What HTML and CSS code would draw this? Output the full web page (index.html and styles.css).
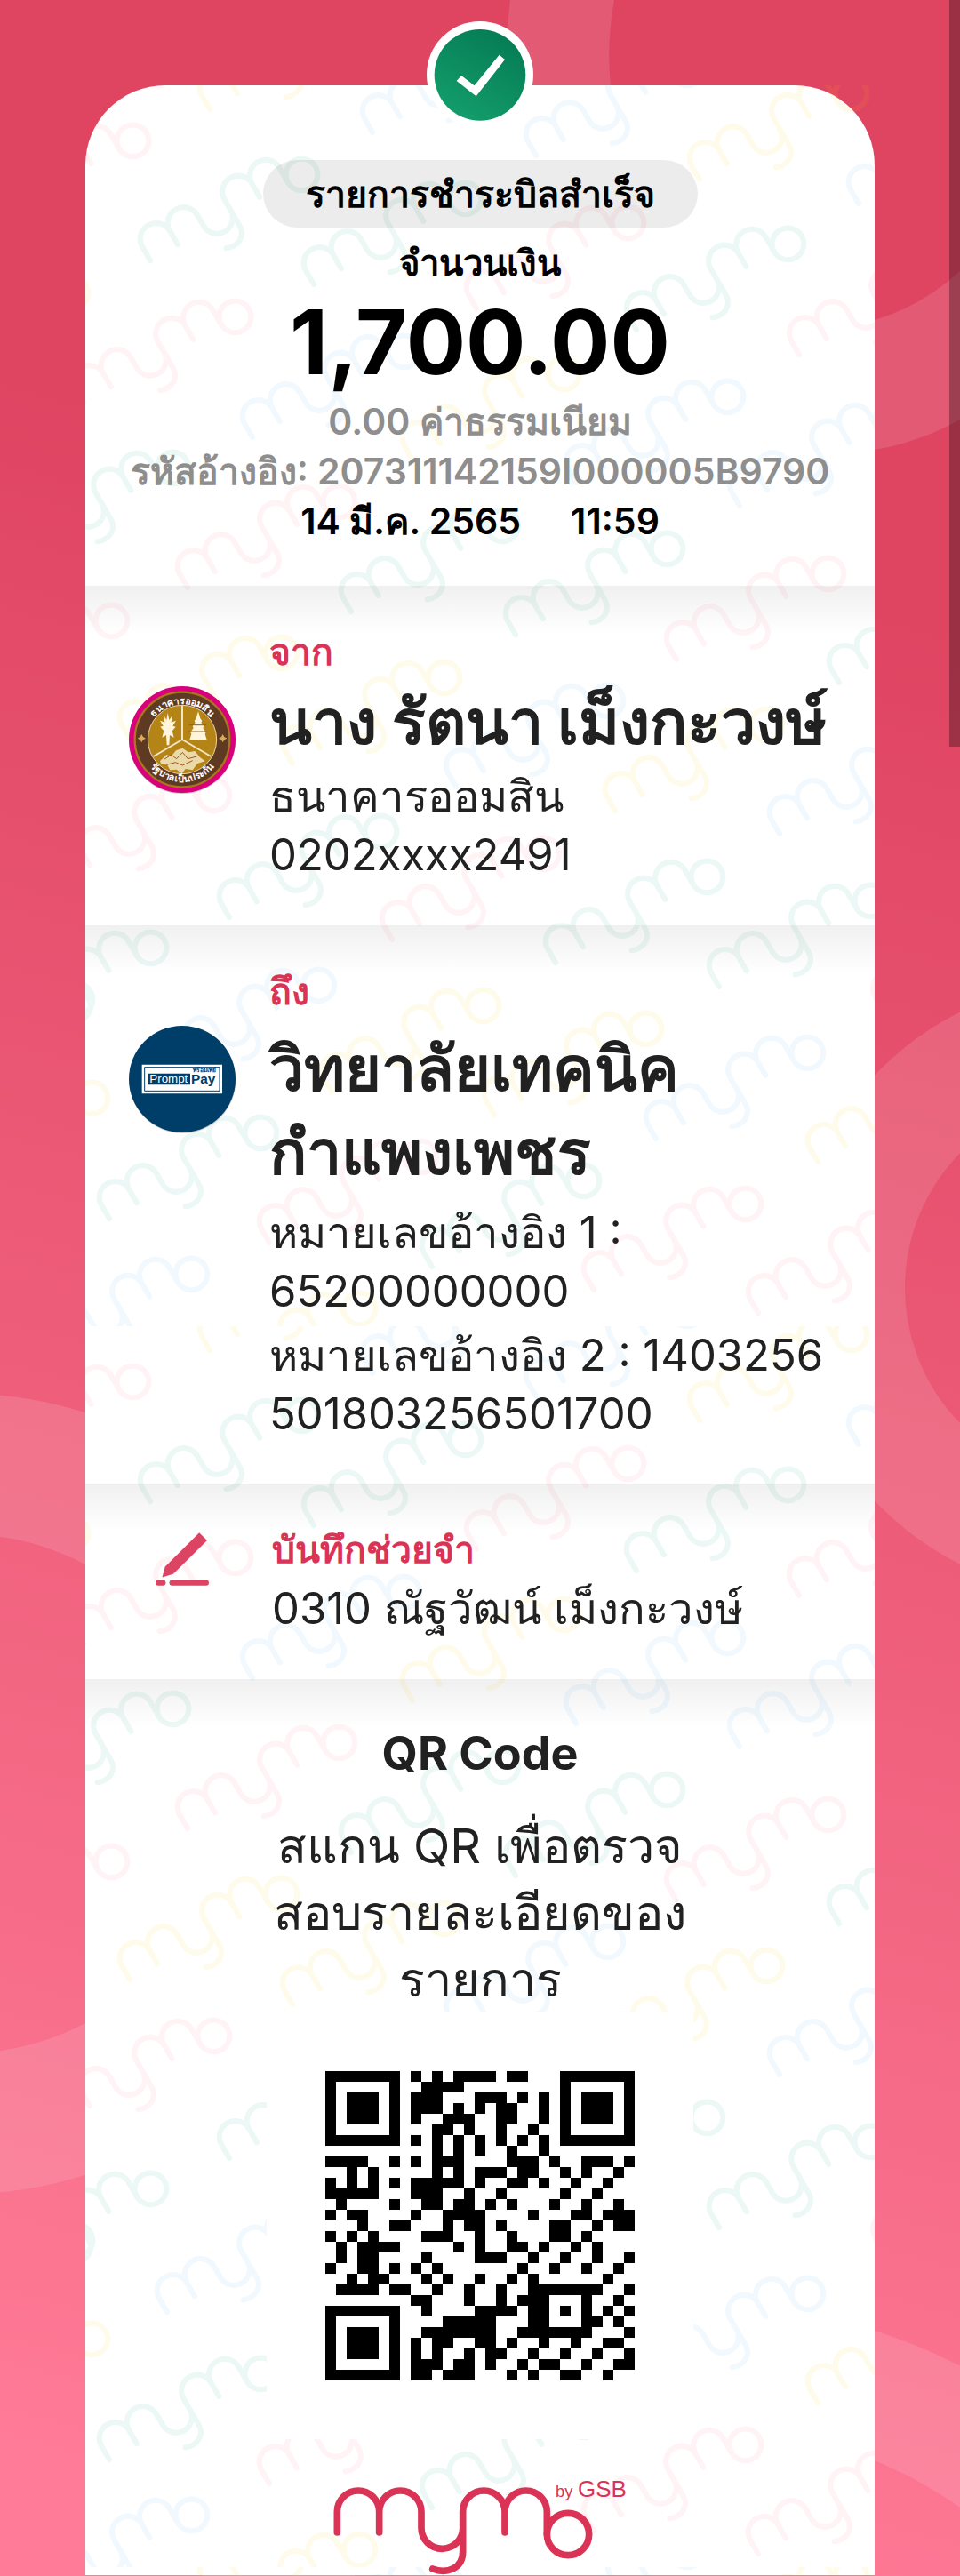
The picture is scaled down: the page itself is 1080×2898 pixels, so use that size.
FILE: index.html
```html
<!DOCTYPE html>
<html lang="th">
<head>
<meta charset="utf-8">
<meta name="viewport" content="width=device-width, initial-scale=1">
<title>รายการชำระบิลสำเร็จ</title>
<link rel="stylesheet" href="styles.css">
</head>
<body>
<svg class="backdrop" viewBox="0 0 1080 2898" preserveAspectRatio="xMidYMin slice" aria-hidden="true">
  <g fill="#fff" fill-opacity=".12">
    <path d="M574 0C560 120 580 250 660 370S860 520 984 506Q1036 497 1080 472V305Q1036 345 984 360C800 400 664 240 687 96Q682 50 691 0Z"/>
  </g>
  <g fill="none" stroke="#fff" stroke-opacity=".12">
    <circle cx="1235" cy="1449" r="282" stroke-width="130"/>
    <circle cx="-41" cy="2018" r="371" stroke-width="158"/>
    <circle cx="783" cy="3247" r="588" stroke-width="137"/>
  </g>
</svg>
<div class="scroll-thumb"></div>

<main class="slip">
  <svg class="watermark" aria-hidden="true">
    <defs>
      <g id="mymo" fill="none" stroke-width="24" stroke-linecap="round" transform="rotate(-30) scale(.2515) translate(-118 -270)">
        <path d="M118 270V200A71 71 0 0 1 260 200V270M260 200A71 71 0 0 1 402 200V255A70 70 0 0 0 542 255M440 393C490 412 542 390 542 335V200A71 71 0 0 1 684 200V270M684 200A71 71 0 0 1 826 200V275"/>
        <circle cx="897" cy="276" r="71"/>
      </g>
      <pattern id="marks" width="888" height="1396" patternUnits="userSpaceOnUse">
        <g transform="translate(-96 -96)">
          <g class="mark-green">
            <use href="#mymo" x="169" y="293"/><use href="#mymo" x="353" y="320"/><use href="#mymo" x="716" y="371"/>
            <use href="#mymo" x="24" y="623"/><use href="#mymo" x="395" y="688"/><use href="#mymo" x="580" y="714"/><use href="#mymo" x="944" y="768"/>
            <use href="#mymo" x="258" y="1032"/><use href="#mymo" x="625" y="1083"/><use href="#mymo" x="809" y="1110"/>
            <use href="#mymo" x="-1" y="1163"/><use href="#mymo" x="-84" y="1221"/><use href="#mymo" x="123" y="1371"/><use href="#mymo" x="486" y="1425"/>
          </g>
          <g class="mark-pink">
            <use href="#mymo" x="-21" y="255"/><use href="#mymo" x="536" y="347"/><use href="#mymo" x="899" y="399"/>
            <use href="#mymo" x="94" y="453"/><use href="#mymo" x="211" y="661"/><use href="#mymo" x="761" y="742"/>
            <use href="#mymo" x="-45" y="795"/><use href="#mymo" x="70" y="991"/><use href="#mymo" x="441" y="1057"/><use href="#mymo" x="993" y="1136"/>
            <use href="#mymo" x="303" y="1398"/><use href="#mymo" x="668" y="1451"/><use href="#mymo" x="853" y="1477"/>
          </g>
          <g class="mark-blue">
            <use href="#mymo" x="419" y="149"/><use href="#mymo" x="603" y="175"/><use href="#mymo" x="966" y="229"/>
            <use href="#mymo" x="284" y="492"/><use href="#mymo" x="648" y="543"/><use href="#mymo" x="832" y="569"/>
            <use href="#mymo" x="513" y="885"/><use href="#mymo" x="877" y="938"/><use href="#mymo" x="188" y="1205"/>
            <use href="#mymo" x="738" y="1281"/><use href="#mymo" x="45" y="1530"/><use href="#mymo" x="535" y="1610"/>
          </g>
          <g class="mark-yellow">
            <use href="#mymo" x="236" y="123"/><use href="#mymo" x="787" y="202"/><use href="#mymo" x="-89" y="426"/>
            <use href="#mymo" x="464" y="517"/><use href="#mymo" x="146" y="831"/><use href="#mymo" x="329" y="859"/><use href="#mymo" x="692" y="912"/>
            <use href="#mymo" x="373" y="1228"/><use href="#mymo" x="556" y="1254"/><use href="#mymo" x="920" y="1307"/>
            <use href="#mymo" x="-67" y="1332"/><use href="#mymo" x="234" y="1569"/>
          </g>
        </g>
      </pattern>
    </defs>
    <rect width="100%" height="100%" fill="url(#marks)"/>
  </svg>

  <svg class="badge" viewBox="0 0 360 360" role="img" aria-label="สำเร็จ">
    <defs>
      <linearGradient id="ok" x1=".8" y1=".1" x2=".3" y2="1"><stop offset="0" stop-color="#067d55"/><stop offset="1" stop-color="#139d6c"/></linearGradient>
    </defs>
    <circle cx="180" cy="180" r="180" fill="#fff"/>
    <circle cx="180" cy="181" r="154" fill="url(#ok)"/>
    <path fill="#fff" d="M101 201l16-18 44 34 84-104 19 16-97 124z"/>
  </svg>

  <header class="summary">
    <h1 class="status">รายการชำระบิลสำเร็จ</h1>
    <p class="caption">จำนวนเงิน</p>
    <p class="amount">1,700.00</p>
    <p class="muted">0.00 ค่าธรรมเนียม</p>
    <p class="muted">รหัสอ้างอิง: 207311142159I000005B9790</p>
    <p class="when"><span>14 มี.ค. 2565</span><span>11:59</span></p>
  </header>

  <section class="party">
    <svg class="logo" viewBox="0 0 366 366" role="img" aria-label="ธนาคารออมสิน">
      <defs>
        <path id="arc-top" d="M62 183a121 121 0 0 1 242 0"/>
        <path id="arc-bottom" d="M40 183a143 143 0 0 0 286 0"/>
      </defs>
      <circle cx="183" cy="186" r="180" fill="#c9c9c9"/>
      <circle cx="183" cy="183" r="180" fill="#d9007b"/>
      <circle cx="183" cy="183" r="160" fill="#5f3a22" stroke="#a8771c" stroke-width="7"/>
      <circle cx="183" cy="183" r="116" fill="#b58417" stroke="#e9d8ae" stroke-width="3"/>
      <g fill="none" stroke="#f3e6c4" stroke-width="6"><path d="M183 68V183L86 240M183 183L280 240"/></g>
      <g fill="#fff5dc">
        <path d="M134 93l5 24 10-14-3 22 16-6-11 18 10 3-12 14 6 22-14-8-2 34h-8l-2-34-14 8 6-22-12-14 10-3-11-18 16 6-3-22 9 14z"/>
        <path d="M237 88l7 24 6 8-3 6 9 12-3 6 10 14-3 6 6 20h-58l6-20-3-6 10-14-3-6 9-12-3-6 6-8z"/>
        <path d="M108 256l22-22 16 6 16-20 22-8 20 14 22-4 16 20 18 14-26 8-16 22-24-4-12 16-18-14-22 2-10-18-20-2z" opacity=".75"/>
        <path d="M46 165l5 9 9 5-9 5-5 9-5-9-9-5 9-5zM320 165l5 9 9 5-9 5-5 9-5-9-9-5 9-5z" fill="#d9ab5f"/>
      </g>
      <g fill="none" stroke="#9c5a22" stroke-width="3"><path d="M122 250l24-16 18 14 20-22 18 22 30-8M130 268l30-8 24 10 34-16"/><path d="M206 134h58M202 156h66"/></g>
      <g class="crest-text">
        <text><textPath href="#arc-top" startOffset="50%">ธนาคารออมสิน</textPath></text>
        <text><textPath href="#arc-bottom" startOffset="50%">รัฐบาลเป็นประกัน</textPath></text>
      </g>
    </svg>
    <div class="details">
      <h2>จาก</h2>
      <p class="name">นาง รัตนา เม็งกะวงษ์</p>
      <p>ธนาคารออมสิน<br>0202xxxx2491</p>
    </div>
  </section>

  <section class="party payee">
    <svg class="logo" viewBox="0 0 366 366" role="img" aria-label="PromptPay">
      <circle cx="184" cy="186" r="180" fill="#c9c9c9"/>
      <circle cx="183" cy="183" r="180" fill="#003e6a"/>
      <path fill="#fff" d="M47 134h271v98H47z"/>
      <path fill="none" stroke="#003e6a" stroke-width="3" d="M56 143h253v80H56z"/>
      <path fill="#003e6a" d="M69 164h141v38H69z"/>
      <text x="73" y="196" class="pp-prompt">Prompt</text>
      <text x="213" y="198" class="pp-pay">Pay</text>
      <text x="298" y="160" class="pp-thai">พร้อมเพย์</text>
    </svg>
    <div class="details">
      <h2>ถึง</h2>
      <p class="name">วิทยาลัยเทคนิค<br>กำแพงเพชร</p>
      <p>หมายเลขอ้างอิง 1 :<br>65200000000</p>
      <p>หมายเลขอ้างอิง 2 : 1403256<br>501803256501700</p>
    </div>
  </section>

  <section class="party memo">
    <svg class="pencil" viewBox="71 69 178 178" aria-hidden="true">
      <path fill="#dc4463" d="M217 70l26 26-113 112-37 11 10-36z"/>
      <rect x="71" y="228" width="34" height="18" rx="9" fill="#dc4463"/>
      <rect x="117" y="228" width="132" height="18" rx="9" fill="#dc4463"/>
    </svg>
    <div class="details">
      <h2>บันทึกช่วยจำ</h2>
      <p>0310 ณัฐวัฒน์ เม็งกะวงษ์</p>
    </div>
  </section>

  <section class="verify">
    <h2>QR Code</h2>
    <p>สแกน QR เพื่อตรวจ<br>สอบรายละเอียดของ<br>รายการ</p>
    <svg class="qr" viewBox="-5.5 -5.5 40 40" shape-rendering="crispEdges" role="img" aria-label="QR Code">
      <path fill="#fff" d="M-6-6h41v41h-41z"/>
      <path transform="translate(0 .5)" stroke="#000" d="M8 0h1m1 0h1m1 0h4m1 0h2M9 1h4M8 2h3m3 0h3m1 0h1m1 0h1M8 3h3m1 0h1m1 0h1m1 0h2m2 0h1M8 4h1m2 0h3m2 0h2m2 0h1M10 5h2m1 0h1m2 0h1m2 0h1M8 6h1m1 0h1m1 0h1m1 0h1m1 0h1m1 0h1m1 0h1M10 7h1m1 0h1m1 0h1m2 0h1m2 0h1M0 8h4m2 0h1m1 0h1m1 0h3m4 0h3m1 0h1m2 0h3m1 0h1M2 9h1m1 0h1m5 0h1m1 0h1m1 0h3m1 0h2m2 0h1m1 0h1m2 0h1M0 10h1m1 0h1m1 0h1m1 0h1m1 0h5m1 0h1m2 0h2m1 0h1m2 0h1m2 0h1M0 11h5m3 0h3m2 0h1m2 0h1m5 0h1m2 0h1M1 12h1m4 0h1m2 0h2m1 0h2m1 0h1m1 0h1m3 0h1m2 0h1m2 0h1M0 13h1m1 0h2m4 0h1m2 0h4m4 0h1m3 0h2m1 0h3M3 14h1m2 0h2m3 0h1m1 0h2m1 0h1m4 0h2m2 0h1m1 0h2M0 15h1m1 0h1m1 0h1m4 0h3m2 0h1m2 0h1m3 0h2m1 0h1M1 16h1m1 0h4m5 0h1m1 0h1m2 0h2m1 0h1m2 0h1m1 0h1M1 17h1m1 0h2m4 0h1m4 0h3m2 0h1m2 0h1m2 0h1m2 0h1M0 18h1m2 0h2m1 0h1m1 0h1m1 0h1m7 0h1m2 0h1m2 0h1m2 0h1M2 19h1m1 0h2m3 0h1m1 0h1m2 0h1m2 0h1m1 0h1m6 0h1M1 20h4m1 0h2m2 0h1m2 0h1m2 0h1m2 0h7m2 0h1M8 21h2m3 0h1m2 0h1m1 0h3m3 0h1m2 0h1M9 22h1m4 0h4m1 0h2m1 0h1m1 0h1m1 0h1m1 0h1M11 23h5m3 0h2m3 0h2m1 0h1M9 24h7m2 0h7m3 0h1M8 25h1m1 0h2m2 0h2m1 0h1m2 0h1m2 0h1m2 0h2M8 26h1m1 0h1m2 0h1m1 0h2m2 0h1m2 0h1m2 0h1m2 0h1M8 27h3m1 0h2m1 0h1m2 0h1m1 0h2m2 0h1m2 0h2M8 28h2m1 0h3m3 0h1m1 0h1m2 0h2m2 0h1"/>
      <path fill="none" stroke="#000" d="M.5.5h6v6h-6zM22.5.5h6v6h-6zM.5 22.5h6v6h-6z"/>
      <path d="M2 2h3v3H2zM24 2h3v3h-3zM2 24h3v3H2z"/>
    </svg>
    <svg class="brand" viewBox="0 72 1200 342" role="img" aria-label="mymo by GSB">
      <g fill="none" stroke="#db3355" stroke-width="23" stroke-linecap="round">
        <path d="M118 270V200A71 71 0 0 1 260 200V270M260 200A71 71 0 0 1 402 200V255A70 70 0 0 0 542 255M440 393C490 412 542 390 542 335V200A71 71 0 0 1 684 200V270M684 200A71 71 0 0 1 826 200V275"/>
        <circle cx="897" cy="276" r="71"/>
      </g>
      <text x="855" y="150" font-size="55" class="brand-by">by</text>
      <text x="930" y="150" font-size="78" class="brand-by">GSB</text>
    </svg>
  </section>
</main>
</body>
</html>
```
FILE: styles.css
```css
* { box-sizing: border-box; }

body {
  margin: 0;
  position: relative;
  min-height: 100vh;
  padding: 96px 96px 0;
  background: linear-gradient(195deg, #df4461 22%, #ff7b97 96%);
  font-family: Inter, "Noto Sans", sans-serif;
  color: #212121;
}

h1, h2, p { margin: 0; }

.backdrop {
  position: absolute;
  inset: 0;
  width: 100%;
  height: 100%;
}

.scroll-thumb {
  position: absolute;
  top: 0;
  right: 0;
  width: 12px;
  height: 840px;
  background: rgba(0, 0, 0, .3);
}

.slip {
  position: relative;
  background: #fff;
  border-radius: 90px 90px 0 0;
}

.watermark {
  position: absolute;
  inset: 0;
  width: 100%;
  height: 100%;
}

.mark-green { stroke: #23ab8d; opacity: .09; }
.mark-pink { stroke: #f0324f; opacity: .06; }
.mark-blue { stroke: #2ba4ee; opacity: .07; }
.mark-yellow { stroke: #ffc800; opacity: .08; }

.badge {
  position: absolute;
  top: -72px;
  left: 50%;
  width: 120px;
  height: 120px;
  margin-left: -60px;
}

/* Lifts the content above the watermark. */
.summary, .party, .verify { position: relative; }

.summary {
  display: flex;
  flex-direction: column;
  align-items: center;
  padding: 84px 0 45px;
  color: #000;
  font-size: 41px;
  font-weight: 600;
  line-height: 56px;
}

.status {
  margin-bottom: 12px;
  padding: 0 48px;
  border-radius: 38px;
  background: rgba(0, 0, 0, .075);
  font-size: 41px;
  font-weight: 600;
  line-height: 76px;
}

.caption { font-size: 40px; }
.amount { font-size: 100px; font-weight: 700; line-height: 122px; }
.muted { color: #8e8e8e; }
.when { display: flex; gap: 56px; }

.party, .verify {
  background: linear-gradient(rgba(0, 0, 0, .06), transparent 54px);
}

.party {
  display: grid;
  grid-template-columns: 122px 1fr;
  gap: 37px;
  padding: 46px 0 46px 48px;
  font-size: 49px;
  line-height: 66px;
  white-space: nowrap;
}

.party h2 {
  color: #db3355;
  font-size: 41px;
  font-weight: 700;
  line-height: 56px;
}

.logo { width: 122px; height: 122px; margin-top: 66px; }

.name { font-size: 70px; font-weight: 700; line-height: 102px; }

.payee { padding-bottom: 45px; }
.payee .name { margin: 12px 0 11px; line-height: 94px; }
.payee p + p + p { margin-top: 6px; }

.memo { gap: 40px; }
.memo h2 { margin-bottom: 6px; }
.pencil { width: 60px; height: 60px; margin-top: 9px; justify-self: center; }

.crest-text { fill: #fff; font: 700 32px "Noto Sans", sans-serif; text-anchor: middle; }
.pp-prompt { fill: #fff; font: 400 40px "Liberation Sans", sans-serif; }
.pp-pay { fill: #003e6a; font: 700 46px "Liberation Sans", sans-serif; }
.pp-thai { fill: #003e6a; font: 700 20px "Noto Sans", sans-serif; text-anchor: end; }

.verify {
  display: flex;
  flex-direction: column;
  align-items: center;
  padding-top: 52px;
  font-size: 54px;
  line-height: 75px;
  text-align: center;
}

.verify h2 {
  margin-bottom: 34px;
  font-size: 52px;
  font-weight: 700;
  line-height: 64px;
}

.qr { width: 480px; height: 480px; }
.brand { width: 400px; height: 114px; margin-top: 39px; }
.brand-by { fill: #db3355; font-family: "Liberation Sans", sans-serif; }
```
